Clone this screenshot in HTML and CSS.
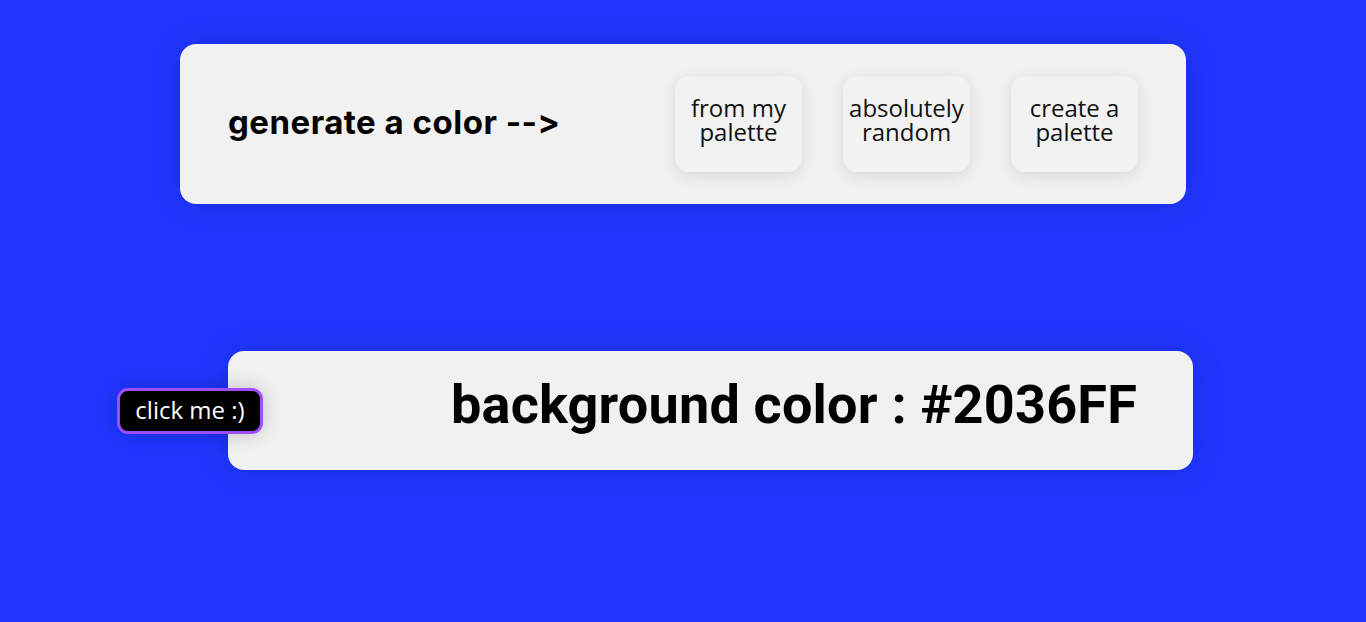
FILE: index.html
```html
<!DOCTYPE html>
<html>
<head>
<meta charset="utf-8">
<link rel="stylesheet" href="styles.css">
</head>
<body>
<main class="page">
  <section class="generator">
    <h2 class="generator-title">generate a color --&gt;</h2>
    <div class="options">
      <button class="option"><span class="line">from my</span><span class="line">palette</span></button>
      <button class="option"><span class="line">absolutely</span><span class="line">random</span></button>
      <button class="option"><span class="line">create a</span><span class="line">palette</span></button>
    </div>
  </section>
  <section class="display-row">
    <button class="click-me">click me :)</button>
    <div class="display">
      <h1 class="display-text">background color : #2036FF</h1>
    </div>
  </section>
</main>
</body>
</html>
```
FILE: styles.css
```css
html, body {
  margin: 0;
  padding: 0;
}
body {
  background: #2036ff;
  height: 622px;
  overflow: hidden;
  font-family: "Open Sans", "Liberation Sans", sans-serif;
}
.page {
  display: flex;
  flex-direction: column;
  padding-top: 44px;
}
.generator {
  box-sizing: border-box;
  width: 1006px;
  height: 160px;
  margin: 0 auto;
  background: #f1f1f1;
  border-radius: 16px;
  box-shadow: 0 0 30px rgba(0, 0, 40, 0.18);
  display: flex;
  align-items: center;
  justify-content: space-between;
  padding: 0 48px 0 48px;
}
.generator-title {
  margin: 0;
  font-family: "Inter", "Liberation Sans", sans-serif;
  font-weight: 700;
  font-size: 33px;
  letter-spacing: 0.5px;
  color: #000;
  position: relative;
  top: -2px;
}
.options {
  display: flex;
  gap: 41px;
}
.option {
  width: 127px;
  height: 96px;
  border: none;
  border-radius: 14px;
  background: #f2f2f2;
  box-shadow: 0 4px 16px rgba(0, 0, 0, 0.10);
  font-family: "Open Sans", sans-serif;
  font-size: 24px;
  line-height: 24px;
  color: #111;
  padding: 0 0 9px 0;
  text-align: center;
  display: flex;
  flex-direction: column;
  align-items: center;
  justify-content: center;
}
.line {
  display: block;
  white-space: nowrap;
}
.display-row {
  position: relative;
  margin-top: 147px;
  margin-left: 228px;
}
.display {
  box-sizing: border-box;
  width: 965px;
  height: 119px;
  background: #f1f1f1;
  border-radius: 16px;
  box-shadow: 0 0 30px rgba(0, 0, 40, 0.18);
  display: flex;
  align-items: center;
  justify-content: flex-end;
  padding-right: 56px;
  padding-bottom: 12px;
}
.display-text {
  margin: 0;
  font-family: Roboto, "Liberation Sans", sans-serif;
  font-weight: 700;
  font-size: 54px;
  letter-spacing: 0.2px;
  color: #000;
  white-space: nowrap;
}
.click-me {
  position: absolute;
  left: -111px;
  top: 37px;
  z-index: 2;
  box-sizing: border-box;
  width: 146px;
  height: 46px;
  background: #000;
  border: 3px solid #a14dff;
  border-radius: 11px;
  color: #fff;
  font-family: "Open Sans", sans-serif;
  font-size: 24px;
  line-height: 1;
  padding: 0 0 2px 0;
  box-shadow: 0 0 20px rgba(0, 0, 0, 0.2);
}
```
